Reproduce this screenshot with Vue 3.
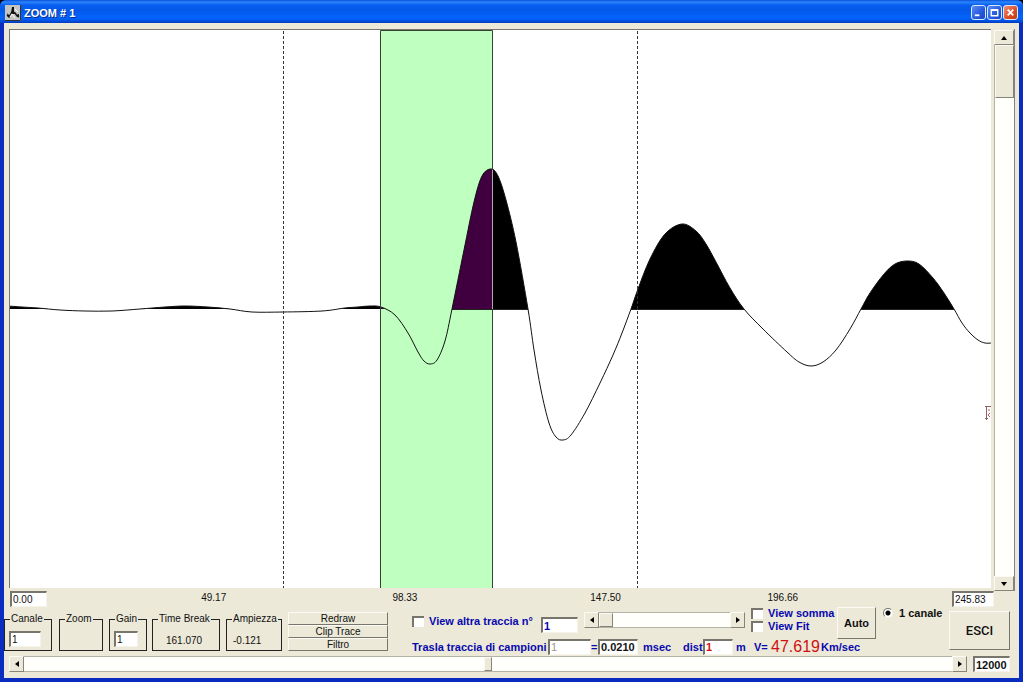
<script setup>
import { ref } from 'vue'

const BASE = 309
const samples = [
  [8, 306], [22, 307], [38, 308], [60, 310], [85, 311], [112, 311], [140, 309], [165, 307], [185, 306],
  [208, 307], [230, 309], [252, 312], [283, 312], [322, 311], [345, 308], [358, 307], [370, 306],
  [381, 307], [395, 315], [408, 333], [418, 352], [424, 361], [430, 364], [437, 360], [445, 341],
  [452, 309], [464, 250], [474, 202], [482, 176], [491, 169], [498, 176], [506, 200], [516, 242], [528, 309],
  [534, 350], [541, 390], [549, 423], [556, 437], [563, 440], [571, 435], [585, 413], [600, 383], [613, 355],
  [622, 333], [631, 309], [638, 289], [650, 259], [665, 234], [682, 224], [696, 231], [706, 244],
  [716, 262], [730, 288], [744, 309], [763, 329], [787, 352], [799, 362], [811, 366], [823, 362],
  [836, 350], [850, 329], [861, 309], [870, 293], [884, 274], [895, 264], [907, 261], [919, 264],
  [933, 278], [944, 293], [954, 309], [962, 323], [970, 333], [978, 340], [985, 343], [992, 343]
]

function smooth(p) {
  let d = `M${p[0][0]} ${p[0][1]}`
  for (let i = 0; i < p.length - 1; i++) {
    const a = p[i - 1] || p[i]
    const b = p[i]
    const c = p[i + 1]
    const e = p[i + 2] || c
    d += `C${b[0] + (c[0] - a[0]) / 6} ${b[1] + (c[1] - a[1]) / 6} ${c[0] - (e[0] - b[0]) / 6} ${c[1] - (e[1] - b[1]) / 6} ${c[0]} ${c[1]}`
  }
  return d
}

const line = smooth(samples)
const area = `${line}L992 ${BASE}L8 ${BASE}Z`

const ticks = ['49.17', '98.33', '147.50', '196.66']
const start = ref('0.00')
const end = ref('245.83')
const canale = ref('1')
const gain = ref('1')
const other = ref('1')
const shift = ref('1')
const msec = ref('0.0210')
const dist = ref('1')
const total = ref('12000')
const vpos = ref(0)
const hpos = ref(50)
const tpos = ref(0)
</script>

<template>
  <div class="window">
    <header class="title">
      <svg class="logo" viewBox="0 0 16 16" aria-hidden="true">
        <rect width="16" height="16" fill="#c4c4c0" />
        <path d="M0 15.500H15.500V0" fill="none" stroke="#333" />
        <path d="M2 10l2 2 3-5 3 1 2 3 2 1" fill="none" stroke="#222" stroke-width="1.500" />
        <path d="M6 8L7 2h2v5l2 2-3 0zM2 8l3 3-2 1zM11 10l3-1 0 3z" fill="#111" />
        <path d="M5 12l2-3 3 4M10 4l3 3" fill="none" stroke="#fff" />
      </svg>
      <h1>ZOOM # 1</h1>
      <div class="caption">
        <button aria-label="Minimize"><svg viewBox="0 0 14 14"><path d="M3 10h5" stroke="#fff" stroke-width="2" /></svg></button>
        <button aria-label="Maximize"><svg viewBox="0 0 14 14"><path d="M3.500 4.500h7v6h-7zM3 4h8" stroke="#fff" stroke-width="1.500" fill="none" /></svg></button>
        <button class="close" aria-label="Close"><svg viewBox="0 0 14 14"><path d="M4 4l6 6M10 4l-6 6" stroke="#fff" stroke-width="2" /></svg></button>
      </div>
    </header>

    <main class="body">
      <div class="plot">
        <svg class="chart" viewBox="10 30 981 558" preserveAspectRatio="none" role="img" aria-label="Trace 1">
          <defs>
            <clipPath id="inside"><rect x="381" y="30" width="112" height="279" /></clipPath>
            <clipPath id="outside"><path d="M8 30H381V309H8zM493 30H992V309H493z" /></clipPath>
          </defs>
          <rect x="381" y="30" width="112" height="558" fill="#bfffbf" />
          <path :d="area" fill="#000" clip-path="url(#outside)" />
          <path :d="area" fill="#400040" clip-path="url(#inside)" />
          <path d="M452 309.500H528M631 309.500H744M861 309.500H954" stroke="#222" />
          <path :d="line" fill="none" stroke="#111" />
          <path d="M283.500 31V588M637.500 31V588" stroke="#333" stroke-dasharray="3 2" />
          <path d="M380.500 588V30.500H492.500V588" fill="none" stroke="#334433" />
          <path d="M492.500 170V309" stroke="#b4a0b4" />
          <g fill="none" stroke="#8c6464">
            <path d="M986.500 406V420M985 406.500H991M985 418.500H988" />
            <path d="M989 409v2M990 413l-2 2 2 2" stroke="#b46464" />
          </g>
        </svg>
        <div class="vbar">
          <button class="arrow" aria-label="Scroll up"><svg viewBox="0 0 8 8"><path d="M1 6L4 2l3 4z" /></svg></button>
          <input v-model="vpos" type="range" class="range vertical" aria-label="Vertical position">
          <button class="arrow" aria-label="Scroll down"><svg viewBox="0 0 8 8"><path d="M1 2l3 4 3-4z" /></svg></button>
        </div>
      </div>

      <div class="axis">
        <input v-model="start" class="field w-start" aria-label="Start">
        <span v-for="t in ticks" :key="t">{{ t }}</span>
        <input v-model="end" class="field w-end" aria-label="End">
      </div>

      <div class="controls">
        <div class="groups">
          <fieldset class="g-canale"><legend>Canale</legend><input v-model="canale" class="field" aria-label="Canale"></fieldset>
          <fieldset class="g-zoom"><legend>Zoom</legend></fieldset>
          <fieldset class="g-gain"><legend>Gain</legend><input v-model="gain" class="field" aria-label="Gain"></fieldset>
          <fieldset class="g-time"><legend>Time Break</legend><output>161.070</output></fieldset>
          <fieldset class="g-amp"><legend>Ampiezza</legend><output>-0.121</output></fieldset>
        </div>
        <div class="actions">
          <button class="raised">Redraw</button>
          <button class="raised">Clip Trace</button>
          <button class="raised">Filtro</button>
        </div>

        <div class="middle">
          <div class="line top">
            <label class="check other"><input type="checkbox" class="box">View altra traccia n°</label>
            <input v-model="other" class="field strong blue w-other" aria-label="Traccia n°">
            <div class="hbar small">
              <button class="arrow" aria-label="Previous"><svg viewBox="0 0 8 8"><path d="M6 1L2 4l4 3z" /></svg></button>
              <input v-model="tpos" type="range" class="range wide" aria-label="Traccia">
              <button class="arrow" aria-label="Next"><svg viewBox="0 0 8 8"><path d="M2 1l4 3-4 3z" /></svg></button>
            </div>
            <div class="views">
              <label class="check"><input type="checkbox" class="box">View somma</label>
              <label class="check"><input type="checkbox" class="box">View Fit</label>
            </div>
            <button class="raised auto">Auto</button>
            <label class="check radio"><input type="radio" class="dot" checked>1 canale</label>
          </div>
          <div class="line bottom">
            <label class="l-shift" for="shift">Trasla traccia di campioni</label>
            <input id="shift" v-model="shift" class="field w-shift" disabled>
            <label class="l-eq" for="msec">=</label>
            <input id="msec" v-model="msec" class="field strong w-msec">
            <span class="l-msec">msec</span>
            <label for="dist">dist</label>
            <input id="dist" v-model="dist" class="field red w-dist">
            <span class="l-m">m</span>
            <span class="l-v">V=</span>
            <output class="speed">47.619</output>
            <span>Km/sec</span>
          </div>
        </div>
        <button class="raised esci">ESCI</button>
      </div>

      <div class="foot">
        <div class="hbar">
          <button class="arrow" aria-label="Scroll left"><svg viewBox="0 0 8 8"><path d="M6 1L2 4l4 3z" /></svg></button>
          <input v-model="hpos" type="range" class="range" aria-label="Horizontal position">
          <button class="arrow" aria-label="Scroll right"><svg viewBox="0 0 8 8"><path d="M2 1l4 3-4 3z" /></svg></button>
        </div>
        <input v-model="total" class="field strong w-total" aria-label="Samples">
      </div>
    </main>
  </div>
</template>

<style>
body { background: #000; }
</style>

<style scoped>
* { box-sizing: border-box; }
.window {
  display: flex; flex-direction: column;
  height: 100vh; min-height: 400px; overflow: hidden;
  padding: 0 4px 4px;
  background: #0a2cc0;
  border-radius: 6px 6px 0 0;
  font: 10px/12px "Liberation Sans", Arial, sans-serif;
  color: #111;
}
button, input { font: inherit; color: inherit; margin: 0; }
button { padding: 0; border: 0; }
.title {
  display: flex; align-items: center; gap: 3px;
  height: 23px; margin: 0 -4px; padding: 2px 5px 0;
  background: linear-gradient(#0a50d8 0, #2c84fc 2px, #0860f0 5px, #0458e8 10px, #0464fc 18px, #0050e0 21px, #0038b8);
}
.logo { width: 16px; height: 16px; }
h1 { flex: 1; margin: 0; font: bold 11px/14px "Liberation Sans", Arial, sans-serif; color: #fff; text-shadow: 1px 1px #0a2c90; }
.caption { display: flex; gap: 1px; }
.caption button {
  width: 15px; height: 15px; border: 1px solid #dce8ff; border-radius: 3px;
  background: linear-gradient(135deg, #5c8cf4, #2458dc 60%, #1c48c8);
}
.caption .close { background: linear-gradient(135deg, #f09078, #dc4c24 60%, #c03c14); }
.caption svg { display: block; width: 13px; height: 13px; }
.body { flex: 1; min-height: 0; display: flex; flex-direction: column; padding: 6px 4px 6px 5px; background: #ece9d8; }
.plot { flex: 1; min-height: 0; display: flex; gap: 3px; }
.chart {
  flex: 1; min-width: 0; height: calc(100% - 3px);
  background: #fff; border-top: 1px solid #77756c; border-left: 1px solid #77756c;
}
.vbar { display: flex; flex-direction: column; width: 21px; padding-top: 1px; border-right: 1px solid #85837a; }
.arrow {
  flex: none; display: grid; place-items: center; width: 15px; height: 16px;
  background: #ece9d8; border: 1px solid; border-color: #fbfaf4 #85837a #85837a #fbfaf4;
}
.arrow svg { width: 8px; height: 8px; fill: #000; }
.vbar .arrow { width: 20px; height: 15px; }
.range {
  appearance: none; flex: 1; min-width: 0; min-height: 0; height: 100%;
  background: #fffffb; border: solid #b4b2a6; border-width: 1px 0;
}
.range::-webkit-slider-thumb {
  appearance: none; width: 8px; height: 14px; background: #ece9d8;
  border: 1px solid; border-color: #fbfaf4 #85837a #85837a #fbfaf4;
}
.range.wide::-webkit-slider-thumb { width: 14px; }
.range.vertical { writing-mode: vertical-lr; width: 20px; height: auto; border-width: 0 0 0 1px; }
.range.vertical::-webkit-slider-thumb { width: 19px; height: 53px; }
.field {
  height: 16px; min-width: 0; padding: 0 1px; background: #fff; border: 1px solid;
  border-color: #77756c #f6f4ea #f6f4ea #77756c; border-width: 2px 1px 1px 2px; border-radius: 0;
}
.axis {
  display: grid; align-items: center; justify-items: center;
  grid-template-columns: 108fr 191fr 191fr 210fr 144fr 139fr;
  margin: 0 21px 0 1px; height: 16px;
}
.axis span { padding-bottom: 2px; }
.w-start { width: 37px; justify-self: start; }
.w-end { width: 42px; justify-self: end; }
.controls { display: flex; margin-left: -5px; height: 49px; }
.groups { display: flex; padding-top: 6px; }
fieldset { height: 38px; min-width: 0; margin: 0; padding: 6px 4px 0; border: 1px solid #222; }
legend { padding: 0 1px; line-height: 12px; margin-left: 1px; white-space: nowrap; }
fieldset .field { display: block; width: 32px; }
.g-canale { width: 48px; margin-right: 7px; }
.g-zoom { width: 44px; margin-right: 6px; }
.g-gain { width: 38px; margin-right: 5px; }
.g-gain .field { width: 24px; }
.g-time { width: 68px; margin-right: 6px; }
.g-amp { width: 56px; margin-right: 6px; }
fieldset output { display: block; padding: 4px 2px 0; }
.g-time output { padding-left: 9px; }
.raised {
  background: #ece9d8; border: 1px solid; border-color: #fbfaf4 #77756c #77756c #fbfaf4;
}
.actions { display: grid; grid-template-rows: repeat(3, 13px); width: 100px; padding-top: 5px; margin-right: 24px; }
.middle { flex: 1; min-width: 0; color: #0808b0; font: bold 11px/12px "Liberation Sans", Arial, sans-serif; white-space: nowrap; }
.line { display: flex; }
.top { height: 31px; align-items: flex-start; }
.check { display: flex; align-items: center; gap: 5px; height: 12px; }
.box {
  appearance: none; width: 12px; height: 11px; background: #fff;
  border: solid #77756c; border-width: 2px 0 0 2px;
}
.box:checked { background: #0808b0; }
.other { width: 129px; margin-top: 8px; }
.w-other { width: 37px; margin: 10px 6px 0 0; }
.hbar { flex: 1; display: flex; height: 16px; min-width: 0; }
.small { margin: 5px 6px 0 0; }
.views { display: flex; flex-direction: column; gap: 1px; width: 86px; }
.auto { width: 39px; height: 32px; margin-right: 7px; color: #111; }
.radio { width: 66px; color: #111; gap: 6px; }
.dot {
  appearance: none; width: 10px; height: 10px; border-radius: 50%; background: #fff;
  border: 1px solid; border-color: #77756c #f6f4ea #f6f4ea #77756c;
}
.dot:checked { background: radial-gradient(circle, #000 0 2px, #fff 3px); }
.bottom { height: 17px; align-items: center; }
.l-shift { width: 136px; }
.w-shift { width: 43px; color: #999; font-weight: normal; }
.l-eq { width: 7px; }
.w-msec { width: 40px; margin-right: 5px; color: #111; }
.l-msec { width: 40px; }
.bottom label[for="dist"] { width: 20px; }
.w-dist { width: 30px; margin-right: 3px; }
.l-m { width: 18px; }
.l-v { width: 16px; }
.strong { font: bold 11px/12px "Liberation Sans", Arial, sans-serif; }
.blue { color: #0808b0; }
.red { color: #d01010; }
.speed { width: 51px; padding-left: 1px; font: 16px/16px "Liberation Sans", Arial, sans-serif; color: #d01010; }
.esci { width: 61px; height: 39px; margin: 4px 5px 0 0; font: 500 13px/14px Roboto, "Liberation Sans", sans-serif; }
.foot { display: flex; gap: 6px; margin-right: 5px; }
.w-total { width: 37px; }
</style>
